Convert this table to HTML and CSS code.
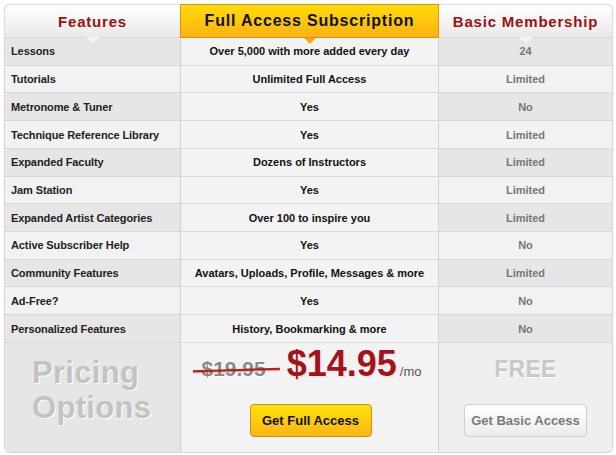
FILE: index.html
```html
<!DOCTYPE html>
<html>
<head>
<meta charset="utf-8">
<link rel="stylesheet" href="styles.css">
</head>
<body>
<div class="compare">
  <div class="row head">
    <div class="c1 h-plain"><span>Features</span><i class="notch"></i></div>
    <div class="c2 h-gold"><span>Full Access Subscription</span><i class="notch-gold"></i></div>
    <div class="c3 h-plain last"><span>Basic Membership</span><i class="notch"></i></div>
  </div>
  <div class="row dark"><div class="c1">Lessons</div><div class="c2">Over 5,000 with more added every day</div><div class="c3">24</div></div>
  <div class="row"><div class="c1">Tutorials</div><div class="c2">Unlimited Full Access</div><div class="c3">Limited</div></div>
  <div class="row dark"><div class="c1">Metronome &amp; Tuner</div><div class="c2">Yes</div><div class="c3">No</div></div>
  <div class="row"><div class="c1">Technique Reference Library</div><div class="c2">Yes</div><div class="c3">Limited</div></div>
  <div class="row dark"><div class="c1">Expanded Faculty</div><div class="c2">Dozens of Instructors</div><div class="c3">Limited</div></div>
  <div class="row"><div class="c1">Jam Station</div><div class="c2">Yes</div><div class="c3">Limited</div></div>
  <div class="row dark"><div class="c1">Expanded Artist Categories</div><div class="c2">Over 100 to inspire you</div><div class="c3">Limited</div></div>
  <div class="row"><div class="c1">Active Subscriber Help</div><div class="c2">Yes</div><div class="c3">No</div></div>
  <div class="row dark"><div class="c1">Community Features</div><div class="c2">Avatars, Uploads, Profile, Messages &amp; more</div><div class="c3">Limited</div></div>
  <div class="row"><div class="c1">Ad-Free?</div><div class="c2">Yes</div><div class="c3">No</div></div>
  <div class="row dark"><div class="c1">Personalized Features</div><div class="c2">History, Bookmarking &amp; more</div><div class="c3">No</div></div>
  <div class="row foot">
    <div class="c1 f1"><div class="pricing">Pricing<br>Options</div></div>
    <div class="c2 f2">
      <div class="prices"><span class="old">$19.95</span><span class="new">$14.95</span><span class="mo">/mo</span></div>
      <a class="btn btn-gold">Get Full Access</a>
    </div>
    <div class="c3 f3">
      <div class="free">FREE</div>
      <a class="btn btn-basic">Get Basic Access</a>
    </div>
  </div>
</div>
</body>
</html>
```
FILE: styles.css
```css
* { box-sizing: border-box; }
html, body { margin: 0; padding: 0; background: #fff; }
body { font-family: "Liberation Sans", Arial, sans-serif; }

.compare {
  margin: 4px 0 0 4px;
  width: 609px;
  border: 1px solid #d6d6d6;
  border-top: none;
  border-radius: 6px;
  box-shadow: 0 0 2px rgba(0,0,0,0.08);
}

.row { display: flex; height: 27.73px; border-bottom: 1px solid #d8d8d8; }
.row > div { display: flex; align-items: center; font-size: 11px; font-weight: bold; }
.c1 { width: 175px; padding-left: 6px; color: #222; background: #f2f2f2; letter-spacing: -0.1px; }
.c2 { width: 259px; justify-content: center; color: #111; background: #f3f3f3; border-left: 1px solid #d2d2d2; border-right: 1px solid #d2d2d2; }
.c3 { flex: 1; justify-content: center; color: #777; background: #f2f2f2; }
.row.dark .c1, .row.dark .c3 { background: #e6e6e6; }

.row.head { height: 34px; border-bottom: none; position: relative; }
.head > div { position: relative; justify-content: center; padding: 0; }
.h-plain {
  background: linear-gradient(#ffffff, #e9e9e9);
  border-top: 1px solid #dcdcdc;
  border-bottom: 1px solid #d6d6d6;
  color: #9a1010;
  font-size: 15px !important;
  letter-spacing: 0.8px !important;
}
.head .c1 { border-top-left-radius: 6px; border-left: 1px solid #dcdcdc; margin-left: -1px; width: 176px; }
.head .last { border-top-right-radius: 6px; border-right: 1px solid #dcdcdc; margin-right: -1px; }
.h-gold {
  background: linear-gradient(#ffdc0a, #fbb212);
  border: 1px solid #e1930c !important;
  color: #111;
  font-size: 16px !important;
  letter-spacing: 0.8px;
  z-index: 2;
}
.notch {
  position: absolute; left: 50%; bottom: -6px; margin-left: -7px;
  width: 0; height: 0;
  border-left: 7px solid transparent; border-right: 7px solid transparent;
  border-top: 6px solid #f4f4f4;
  z-index: 3;
}
.notch-gold {
  position: absolute; left: 50%; bottom: -7px; margin-left: -6px;
  width: 0; height: 0;
  border-left: 6px solid transparent; border-right: 6px solid transparent;
  border-top: 6px solid #f7a812;
  z-index: 3;
}

.row.foot { height: 109px; border-bottom: none; }
.foot > div { flex-direction: column; justify-content: flex-start; }
.f1 { background: #e6e6e6 !important; border-bottom-left-radius: 6px; align-items: flex-start !important; padding-left: 27px; }
.f3 { background: #efefef !important; border-bottom-right-radius: 6px; }
.pricing {
  margin-top: 12px;
  font-size: 31px; line-height: 35px; font-weight: bold;
  color: #c3c3c3; text-shadow: 1px 1px 0 #fff;
  text-align: left; letter-spacing: 0.3px;
}
.prices { display: flex; align-items: baseline; margin-top: 0; height: 40px; position: relative; left: 2px; }
.old {
  position: relative;
  font-size: 21px; color: #8a8a8a; margin-right: 21px;
  text-shadow: 1px 1px 0 #fff;
}
.old::after {
  content: ""; position: absolute; left: -8px; right: -15px; top: 50%;
  height: 2px; background: #b81c1c; transform: rotate(-1.5deg);
  box-shadow: 0 1px 1px rgba(180,20,20,0.4);
}
.new {
  font-size: 36px; color: #a5121a;
  text-shadow: 0 0 2px #fff, 0 0 3px #fff, 1px 1px 2px #ccc;
}
.mo { font-size: 13px; font-weight: normal; color: #555; margin-left: 3px; }

.btn {
  display: flex; align-items: center; justify-content: center;
  height: 33px; border-radius: 4px; font-size: 13px; font-weight: bold;
  margin-top: 21px;
}
.btn-gold {
  width: 122px; margin-left: 2px;
  background: linear-gradient(#ffe20a, #fbb515);
  border: 1px solid #d48d12; color: #111;
}
.free {
  margin-top: 13px; font-size: 23px; font-weight: bold; color: #c8c8c8;
  text-shadow: 1px 1px 0 #fff; letter-spacing: 0.3px;
}
.btn-basic {
  width: 123px; margin-top: 21px;
  background: linear-gradient(#ffffff, #ececec);
  border: 1px solid #cfcfcf; color: #7a7a7a;
}
```
